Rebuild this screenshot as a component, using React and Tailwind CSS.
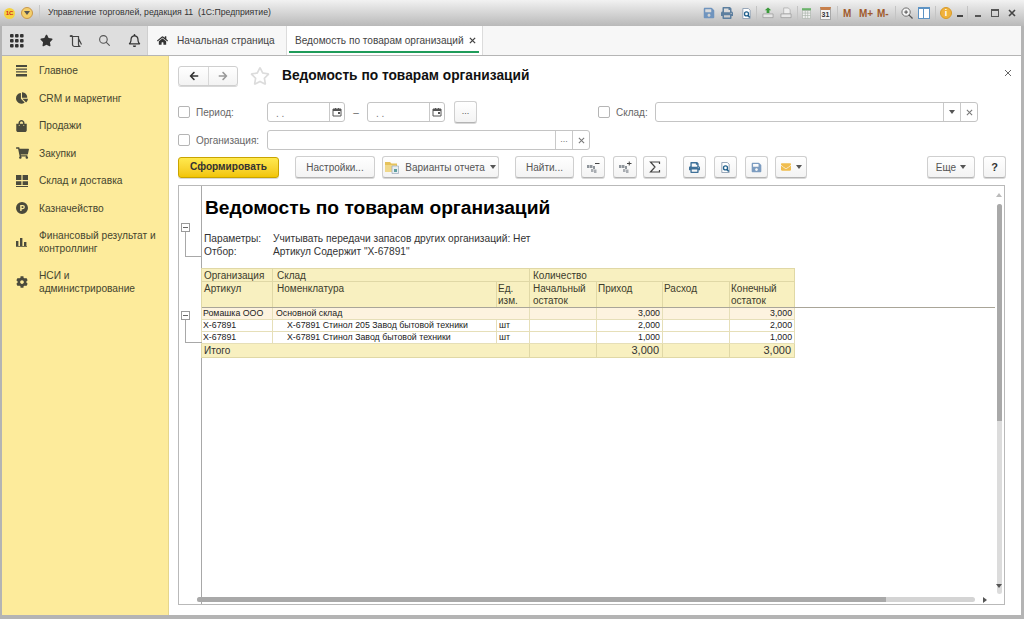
import React from "react";
import { FaStar, FaRegBell, FaChartPie, FaShoppingBag, FaShoppingCart, FaCog, FaHome, FaPrint, FaSave, FaEnvelope, FaRegStar, FaArrowLeft, FaArrowRight } from "react-icons/fa";
import { HiOutlineSearch } from "react-icons/hi";

const Caret = ({ className = "", fill = "#555" }) => (
  <svg width="6" height="4" viewBox="0 0 6 4" className={className}>
    <path d="M0 0h6L3 4z" fill={fill} />
  </svg>
);

const Cross = ({ size = 7, color = "#777", width = 1.2 }) => (
  <svg width={size} height={size} viewBox="0 0 8 8">
    <path d="M1 1l6 6M7 1L1 7" stroke={color} strokeWidth={width} />
  </svg>
);

const Calendar = () => (
  <svg width="10" height="10" viewBox="0 0 10 10">
    <path d="M1 2h8v7H1z" fill="none" stroke="#555" strokeWidth="1" />
    <path d="M1 2h8v2H1zM3 1h1v2H3zM6 1h1v2H6zM6 5h2v2H6z" fill="#555" />
  </svg>
);

const Menu = () => (
  <svg width="11" height="12" viewBox="0 0 11 12" fill="#4a4a3c">
    <path d="M0 0h11v2H0zM0 3.400h11v1.400H0zM0 6.200h11v1.400H0zM0 9h11v2.400H0z" />
  </svg>
);

const Tiles = () => (
  <svg width="12" height="12" viewBox="0 0 12 12" fill="#4a4a3c">
    <path d="M0 0h5.400v5H0zM6.600 0H12v5H6.600zM0 6.200h5.400V10H0zM6.600 6.200H12V10H6.600zM0 11h12v1H0z" />
  </svg>
);

const Parking = () => (
  <svg width="12" height="12" viewBox="0 0 12 12">
    <path fillRule="evenodd" fill="#4a4a3c" d="M6 0a6 6 0 1 1 0 12A6 6 0 0 1 6 0zM4.200 3v6h1.400V7.200h1.200a2.100 2.100 0 0 0 0-4.200zM5.600 4.200h1.100a.9.9 0 0 1 0 1.800H5.600z" />
  </svg>
);

const Bars = () => (
  <svg width="11" height="10" viewBox="0 0 11 10" fill="#4a4a3c">
    <path d="M0 4h2.400v5H0zM4 1h2.400v8H4zM8 5h2.400v4H8zM0 9.200h11v.8H0z" />
  </svg>
);

const Apps = () => (
  <svg width="14" height="14" viewBox="0 0 14 14" fill="#333">
    {[0, 5, 10].map((y) =>
      [0, 5, 10].map((x) => <rect key={x + "-" + y} x={x} y={y} width="3.600" height="3.600" rx="1" />)
    )}
  </svg>
);

const Scroll = () => (
  <svg width="14" height="14" viewBox="0 0 14 14" fill="none" stroke="#444" strokeWidth="1.200">
    <path d="M1 2.500h8.500v8a2 2 0 0 0 2 2H5.500a2 2 0 0 1-2-2v-8M1 2.500a1.300 1.300 0 0 1 2.500 0M9.500 4.500l3 6" />
  </svg>
);

const Preview = ({ size = 12 }) => (
  <svg width={size} height={size} viewBox="0 0 12 12">
    <path d="M2 .5h6l2 2v9H2z" fill="#fff" stroke="#8b9cb0" />
    <circle cx="6" cy="6.500" r="2.200" fill="none" stroke="#1f5f8b" strokeWidth="1.400" />
    <path d="M7.500 8l2 2.400" stroke="#1f5f8b" strokeWidth="1.600" />
  </svg>
);

const Sigma = () => (
  <svg width="12" height="12" viewBox="0 0 12 12">
    <path d="M10.500 3V1h-9l4.500 5-4.500 5h9V9" fill="none" stroke="#444" strokeWidth="1.200" />
  </svg>
);

const AbcDoc = ({ sign }) => (
  <svg width="14" height="13" viewBox="0 0 14 13">
    <path d="M1 4h2.500v3H1zM4 4h2.500v3H4zM7 5h2v3H7z" fill="#8f959b" />
    <path d="M5 8h2.500v3H5zM8 8.500h2.500V12H8z" fill="#a9adb2" />
    <path d={sign === "+" ? "M9 2.500h4.500M11.250.5v4" : "M9 2.500h4.500"} stroke="#444" strokeWidth="1" />
  </svg>
);

const Folder = () => (
  <svg width="15" height="13" viewBox="0 0 15 13">
    <path d="M0 1h5l1.500 1.500H12V5H0z" fill="#e6c25c" />
    <path d="M0 4h11v7H0z" fill="#f0d88a" />
    <path d="M7 5h6.500v7.500H7z" fill="#e8eef2" stroke="#9ab" strokeWidth=".7" />
    <path d="M9 8h3v3H9z" fill="#5f9ea0" />
  </svg>
);

const Sep = ({ className = "" }) => <span className={"w-px h-[14px] bg-[#c4c4c4] shrink-0 " + className} />;

const TopIcons = () => (
  <div className="flex items-center h-[26px] ml-auto text-[#a05a2c]">
    <FaSave className="text-[#6f94be] w-[12px] h-[12px]" />
    <FaPrint className="text-[#5d7f9f] w-[12px] h-[12px] ml-[6px]" />
    <span className="ml-[8px] flex"><Preview size={11} /></span>
    <Sep className="ml-[4px]" />
    <svg width="12" height="12" viewBox="0 0 13 12" className="ml-[5px]">
      <path d="M6.500 0l3.500 3H8v3H5V3H3z" fill="#3a9a3a" />
      <path d="M1 7h11v4H1z" fill="#e6e6e6" stroke="#999" strokeWidth=".8" />
    </svg>
    <svg width="12" height="12" viewBox="0 0 13 12" className="ml-[6px]">
      <path d="M4 .5h5l2 2V7H4z" fill="#eee" stroke="#aaa" strokeWidth=".8" />
      <path d="M1 7h11v4H1z" fill="#e6e6e6" stroke="#999" strokeWidth=".8" />
    </svg>
    <Sep className="ml-[5px]" />
    <svg width="9" height="13" viewBox="0 0 11 13" className="ml-[4px]">
      <path d="M0 0h11v3H0z" fill="#6bb36b" />
      <path d="M.5 3h10v9.500H.5zM4 3v9.500M7 3v9.500M.5 6h10M.5 9h10" fill="#f2f2f2" stroke="#a8b0a8" strokeWidth=".8" />
    </svg>
    <span className="ml-[9px] w-[11px] h-[13px] border border-[#a8a8a8] border-t-[3px] border-t-[#c77f4a] bg-[#f4f4f4] text-[7px] leading-[9px] text-center text-[#333] font-bold">31</span>
    <Sep className="ml-[6px]" />
    <span className="ml-[5px] text-[10px] font-bold w-[10px]">M</span>
    <span className="ml-[6px] text-[10px] font-bold w-[14px]">M+</span>
    <span className="ml-[4px] text-[10px] font-bold w-[12px]">M-</span>
    <Sep className="ml-[6px]" />
    <svg width="12" height="12" viewBox="0 0 13 13" className="ml-[5px]">
      <circle cx="5.500" cy="5.500" r="4.500" fill="#f4f4f4" stroke="#666" />
      <path d="M8.500 8.500l4 4" stroke="#555" strokeWidth="1.400" />
      <path d="M3.500 5.500h4M5.500 3.500v4" stroke="#444" />
    </svg>
    <span className="ml-[5px] flex w-[12px] h-[12px] border border-[#5d93c4] border-t-[2px] bg-white">
      <span className="w-[5px] border-r border-[#5d93c4]" />
    </span>
    <Sep className="ml-[5px]" />
    <span className="ml-[4px] w-[12px] h-[12px] rounded-full bg-[#f0b23c] border border-[#d89a28] text-[9px] leading-[10px] text-center font-bold text-white">i</span>
    <span className="ml-[5px] w-[6px] h-[2px] mt-[6px] bg-[#444]" />
    <Sep className="ml-[4px]" />
    <span className="ml-[7px] w-[6px] h-[2px] mt-[6px] bg-[#555]" />
    <span className="ml-[10px] w-[8px] h-[8px] border border-[#555] border-t-2" />
    <span className="ml-[9px] mr-[8px] flex"><Cross size={8} color="#444" width={1.600} /></span>
  </div>
);

const navItems = [
  { icon: <Menu />, text: "Главное" },
  { icon: <FaChartPie className="w-[12px] h-[12px] text-[#4a4a3c]" />, text: "CRM и маркетинг" },
  { icon: <FaShoppingBag className="w-[11px] h-[12px] text-[#4a4a3c]" />, text: "Продажи" },
  { icon: <FaShoppingCart className="w-[13px] h-[12px] text-[#4a4a3c]" />, text: "Закупки" },
  { icon: <Tiles />, text: "Склад и доставка" },
  { icon: <Parking />, text: "Казначейство" },
];

const Sidebar = () => (
  <aside className="w-[167px] ml-[2px] shrink-0 bg-[#fdeb9b] border-r border-[#e6d68c] pt-[1px] text-[10.200px] leading-[13px] text-[#45452f]">
    {navItems.map((n) => (
      <div key={n.text} className="flex items-center h-[27.500px]">
        <span className="w-[37px] pl-[14px] flex justify-start">{n.icon}</span>
        <span>{n.text}</span>
      </div>
    ))}
    <div className="flex items-center h-[40px]">
      <span className="w-[37px] pl-[14px] flex"><Bars /></span>
      <span className="w-[126px]">Финансовый результат и контроллинг</span>
    </div>
    <div className="flex items-center h-[40px]">
      <span className="w-[37px] pl-[14px] flex"><FaCog className="w-[12px] h-[12px] text-[#4a4a3c]" /></span>
      <span className="w-[110px]">НСИ и администрирование</span>
    </div>
  </aside>
);

const Btn = ({ className = "", children }) => (
  <div className={"h-[22px] flex items-center justify-center rounded-[3px] border border-[#cfcfcf] border-b-[#b4b4b4] bg-gradient-to-b from-white to-[#f3f3f3] shadow-[0_1px_0_#d8d8d8] text-[10px] text-[#555] shrink-0 " + className}>
    {children}
  </div>
);

const Check = ({ className = "" }) => (
  <span className={"w-[12px] h-[12px] rounded-[2px] border border-[#b5b5b5] bg-white shrink-0 " + className} />
);

const Field = ({ className = "", tail = [], children }) => (
  <div className={"h-[20px] flex justify-end rounded-[3px] border border-[#c4c4c4] bg-white text-[9px] text-[#777] shrink-0 " + className}>
    {children}
    {tail.map((t, i) => (
      <span key={i} className="w-[17px] border-l border-[#c9c9c9] flex items-center justify-center">{t}</span>
    ))}
  </div>
);

const DateField = ({ w }) => (
  <div className={"h-[20px] flex rounded-[3px] border border-[#c4c4c4] bg-white text-[10px] text-[#777] shrink-0 " + w}>
    <span className="flex-1 pl-[8px] leading-[22px]">. .</span>
    <span className="w-[15px] border-l border-[#c9c9c9] flex items-center justify-center"><Calendar /></span>
  </div>
);

const headCell = "border border-[#e0d8a6] align-top font-normal text-left pt-px ";
const rowCell = "border border-[#e6dfb8] px-[1px] text-[8.800px] leading-[11px] text-[#222]";

const Report = () => (
  <div className="relative flex-1 min-h-0 flex border border-[#b9b9b9] bg-white overflow-hidden">
    <div className="w-[23px] shrink-0 border-r border-[#a8a8a8]" />
    <div className="flex-1 pl-[3px] pt-[12px]">
      <h1 className="text-[19.200px] leading-[20px] font-bold text-black">Ведомость по товарам организаций</h1>
      <div className="mt-[14px] -ml-[1px] grid grid-cols-[69px_1fr] text-[10.200px] leading-[13px] text-[#333]">
        <span>Параметры:</span>
        <span>Учитывать передачи запасов других организаций: Нет</span>
        <span>Отбор:</span>
        <span>Артикул Содержит "X-67891"</span>
      </div>
      <table className="mt-[10px] -ml-[4px] w-[593px] table-fixed border-collapse">
        <colgroup>
          <col className="w-[71px]" />
          <col className="w-[224px]" />
          <col className="w-[33px]" />
          <col className="w-[67px]" />
          <col className="w-[66px]" />
          <col className="w-[67px]" />
          <col className="w-[65px]" />
        </colgroup>
        <thead className="bg-[#f8f0c0] text-[10px] leading-[12px] text-[#3c3c2c]">
          <tr className="h-[13px] leading-[11px]">
            <th className={headCell + "pl-[2px]"}>Организация</th>
            <th className={headCell + "pl-[4px]"} colSpan={2}>Склад</th>
            <th className={headCell + "pl-[3px]"} colSpan={4}>Количество</th>
          </tr>
          <tr className="h-[26px]">
            <th className={headCell + "pl-[2px]"}>Артикул</th>
            <th className={headCell + "pl-[4px]"}>Номенклатура</th>
            <th className={headCell + "pl-[1px]"}>Ед. изм.</th>
            <th className={headCell + "pl-[3px]"}>Начальный остаток</th>
            <th className={headCell + "pl-[1px]"}>Приход</th>
            <th className={headCell + "pl-[1px]"}>Расход</th>
            <th className={headCell + "pl-[1px]"}>Конечный остаток</th>
          </tr>
        </thead>
        <tbody>
          <tr className="h-[12px] bg-[#fdf3df]">
            <td className={rowCell}>Ромашка ООО</td>
            <td className={rowCell + " pl-[3px]"} colSpan={2}>Основной склад</td>
            <td className={rowCell} />
            <td className={rowCell + " text-right pr-[2px]"}>3,000</td>
            <td className={rowCell} />
            <td className={rowCell + " text-right pr-[2px]"}>3,000</td>
          </tr>
          <tr className="h-[12px]">
            <td className={rowCell}>X-67891</td>
            <td className={rowCell + " pl-[14px]"}>X-67891 Стинол 205 Завод бытовой техники</td>
            <td className={rowCell + " pl-[2px]"}>шт</td>
            <td className={rowCell} />
            <td className={rowCell + " text-right pr-[2px]"}>2,000</td>
            <td className={rowCell} />
            <td className={rowCell + " text-right pr-[2px]"}>2,000</td>
          </tr>
          <tr className="h-[12px]">
            <td className={rowCell}>X-67891</td>
            <td className={rowCell + " pl-[14px]"}>X-67891 Стинол Завод бытовой техники</td>
            <td className={rowCell + " pl-[2px]"}>шт</td>
            <td className={rowCell} />
            <td className={rowCell + " text-right pr-[2px]"}>1,000</td>
            <td className={rowCell} />
            <td className={rowCell + " text-right pr-[2px]"}>1,000</td>
          </tr>
          <tr className="h-[14px] bg-[#f8f0c0] text-[11px] leading-[13px] text-[#333]">
            <td className="border border-[#e0d8a6] px-[2px] text-[10px]" colSpan={3}>Итого</td>
            <td className="border border-[#e0d8a6]" />
            <td className="border border-[#e0d8a6] text-right pr-[3px]">3,000</td>
            <td className="border border-[#e0d8a6]" />
            <td className="border border-[#e0d8a6] text-right pr-[3px]">3,000</td>
          </tr>
        </tbody>
      </table>
    </div>

    {/* frozen header line and outline markers lie over the sheet */}
    <div className="absolute left-[23px] right-[9px] top-[121px] h-px bg-[#a9a598]" />
    <div className="absolute left-[6px] top-[37px] w-[17px] h-[34px] border-l border-b border-[#a8a8a8]" />
    <div className="absolute left-[2px] top-[37px] w-[9px] h-[9px] border border-[#9a9a9a] bg-white flex items-center justify-center"><span className="w-[5px] h-px bg-[#666]" /></div>
    <div className="absolute left-[6px] top-[125px] w-[17px] h-[32px] border-l border-b border-[#a8a8a8]" />
    <div className="absolute left-[2px] top-[125px] w-[9px] h-[9px] border border-[#9a9a9a] bg-white flex items-center justify-center"><span className="w-[5px] h-px bg-[#666]" /></div>

    {/* scrollbars */}
    <Caret fill="#bbb" className="absolute right-[2px] top-[7px] rotate-180" />
    <div className="absolute right-[2px] top-[18px] w-[5px] h-[390px] rounded-full bg-[#dcdcdc]" />
    <div className="absolute right-[2px] top-[18px] w-[5px] h-[217px] rounded-t-full bg-[#a9a9a9]" />
    <Caret className="absolute right-[2px] top-[398px]" />
    <div className="absolute left-[18px] top-[411px] w-[778px] h-[5px] rounded-full bg-[#d4d4d4]" />
    <div className="absolute left-[18px] top-[411px] w-[689px] h-[5px] rounded-l-full bg-[#a9a9a9]" />
    <Caret className="absolute right-[16px] top-[412px] -rotate-90" />
  </div>
);

export default function App() {
  return (
    <div className="w-[1024px] h-[619px] overflow-hidden flex flex-col bg-[#b4b4b4] font-['Liberation_Sans',Arial,sans-serif]">
      <header className="h-[26px] shrink-0 flex items-center bg-gradient-to-b from-[#f2f2f2] to-[#b9b9b9]">
        <span className="ml-[4px] w-[11px] h-[11px] rounded-full bg-[#f5d33f] text-[6px] leading-[11px] text-center font-bold text-[#d2291c]">1C</span>
        <span className="ml-[6px] w-[12px] h-[12px] rounded-full bg-[#f4cf6a] border border-[#c9974a] flex items-center justify-center"><Caret /></span>
        <span className="w-px h-[16px] bg-[#c8c8c8] ml-[6px]" />
        <span className="ml-[8px] text-[8.700px] text-[#333]">Управление торговлей, редакция 11&nbsp; (1С:Предприятие)</span>
        <TopIcons />
      </header>

      <nav className="h-[30px] shrink-0 flex ml-[2px] mr-[3px] bg-[#f7f7f7] border-b border-[#b5b5b5]">
        <div className="w-[146px] flex items-center bg-[#dedede] border-r border-[#cfcfcf] text-[#333]">
          <span className="ml-[8px] flex"><Apps /></span>
          <FaStar className="ml-[16px] w-[13px] h-[13px]" />
          <span className="ml-[16px] flex"><Scroll /></span>
          <HiOutlineSearch className="ml-[15px] w-[13px] h-[13px] text-[#555]" />
          <FaRegBell className="ml-[17px] w-[13px] h-[13px]" />
        </div>
        <div className="w-[139px] flex items-center border-r border-[#dcdcdc] text-[10.100px] text-[#444] whitespace-nowrap">
          <FaHome className="ml-[9px] w-[11px] h-[11px] text-[#333]" />
          <span className="ml-[9px]">Начальная страница</span>
        </div>
        <div className="relative w-[196px] flex items-center bg-white border-r border-[#dcdcdc] text-[10.100px] text-[#444] whitespace-nowrap">
          <span className="ml-[8px]">Ведомость по товарам организаций</span>
          <span className="ml-auto mr-[6px] flex"><Cross size={7} color="#444" width={1.500} /></span>
          <span className="absolute left-[2px] right-[3px] bottom-[2px] h-[2px] bg-[#1f9c5a]" />
        </div>
      </nav>

      <div className="flex-1 min-h-0 flex mb-[4px]">
        <Sidebar />
        <main className="flex-1 min-w-0 mr-[3px] bg-white flex flex-col pl-[9px] pr-[16px] pt-[10px] pb-[10px]">
          <div className="h-[20px] flex items-center shrink-0">
            <div className="w-[60px] h-[20px] flex rounded-[3px] border border-[#cfcfcf] shadow-[0_1px_0_#d8d8d8] bg-gradient-to-b from-white to-[#f3f3f3]">
              <span className="w-[30px] flex items-center justify-center border-r border-[#d8d8d8]"><FaArrowLeft className="w-[10px] h-[10px] text-[#333]" /></span>
              <span className="flex-1 flex items-center justify-center"><FaArrowRight className="w-[10px] h-[10px] text-[#999]" /></span>
            </div>
            <FaRegStar className="ml-[12px] w-[20px] h-[20px] text-[#dcdcdc]" />
            <h2 className="ml-[12px] text-[13.750px] font-bold text-[#111]">Ведомость по товарам организаций</h2>
            <span className="ml-auto -mr-[7px] -mt-[6px] flex"><Cross size={8} color="#666" width={1} /></span>
          </div>

          <div className="mt-[16px] h-[20px] flex items-center shrink-0">
            <Check />
            <span className="ml-[6px] w-[71px] text-[10px] text-[#666]">Период:</span>
            <DateField w="w-[78px]" />
            <span className="w-[22px] text-center text-[10px] text-[#666]">–</span>
            <DateField w="w-[78px]" />
            <Btn className="ml-[9px] w-[23px]"><span className="text-[9px]">...</span></Btn>
            <Check className="ml-[121px]" />
            <span className="ml-[6px] w-[39px] text-[10px] text-[#666]">Склад:</span>
            <Field className="w-[323px]" tail={[<Caret key="c" />, <Cross key="x" />]} />
          </div>

          <div className="mt-[8px] h-[20px] flex items-center shrink-0">
            <Check />
            <span className="ml-[6px] w-[71px] text-[10px] text-[#666]">Организация:</span>
            <Field className="w-[323px]" tail={["...", <Cross key="x" />]} />
          </div>

          <div className="mt-[6px] h-[22px] flex items-center shrink-0">
            <div className="w-[101px] h-[21px] shrink-0 flex items-center justify-center rounded-[3px] border border-[#c9a400] bg-gradient-to-b from-[#ffe94d] to-[#f2c500] text-[10.100px] font-bold text-[#333] shadow-[0_1px_0_#d8d8d8]">Сформировать</div>
            <Btn className="ml-[16px] w-[80px]">Настройки...</Btn>
            <Btn className="ml-[7px] w-[117px]">
              <Folder />
              <span className="ml-[5px]">Варианты отчета</span>
              <Caret className="ml-[5px]" />
            </Btn>
            <Btn className="ml-[16px] w-[59px]">Найти...</Btn>
            <Btn className="ml-[7px] w-[24px]"><AbcDoc sign="-" /></Btn>
            <Btn className="ml-[8px] w-[24px]"><AbcDoc sign="+" /></Btn>
            <Btn className="ml-[6px] w-[24px]"><Sigma /></Btn>
            <Btn className="ml-[16px] w-[23px]"><FaPrint className="w-[11px] h-[11px] text-[#3f7199]" /></Btn>
            <Btn className="ml-[8px] w-[23px]"><Preview size={11} /></Btn>
            <Btn className="ml-[8px] w-[23px]"><FaSave className="w-[11px] h-[11px] text-[#7c9cc0]" /></Btn>
            <Btn className="ml-[7px] w-[32px]">
              <FaEnvelope className="w-[12px] h-[10px] text-[#f0bd4f]" />
              <Caret className="ml-[4px]" />
            </Btn>
            <Btn className="ml-[120px] w-[48px]">Еще<Caret className="ml-[4px]" /></Btn>
            <Btn className="ml-[8px] w-[23px]"><span className="font-bold text-[11px] text-[#333]">?</span></Btn>
          </div>

          <div className="h-[7px] shrink-0" />
          <Report />
        </main>
      </div>
    </div>
  );
}
